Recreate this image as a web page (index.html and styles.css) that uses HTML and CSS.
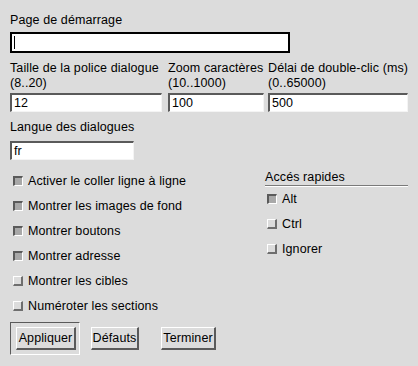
FILE: index.html
```html
<!DOCTYPE html>
<html lang="fr">
<head>
    <meta charset="UTF-8">
    <title>Préférences</title>
    <link rel="stylesheet" href="styles.css">
</head>
<body>

<div class="prefs">
    <div class="field start-field">
        <div class="label">Page de démarrage</div>
        <div class="entry focused start-entry"><span class="caret"></span></div>
    </div>

    <div class="numbers">
        <div class="col col-size">
            <div class="label">Taille de la police dialogue<br>(8..20)</div>
            <div class="entry">12</div>
        </div>
        <div class="col col-zoom">
            <div class="label">Zoom caractères<br>(10..1000)</div>
            <div class="entry">100</div>
        </div>
        <div class="col col-delay">
            <div class="label">Délai de double-clic (ms)<br>(0..65000)</div>
            <div class="entry">500</div>
        </div>
    </div>

    <div class="field lang-field">
        <div class="label">Langue des dialogues</div>
        <div class="entry lang-entry">fr</div>
    </div>

    <div class="options">
        <div class="checks">
            <div class="check"><span class="box on"></span>Activer le coller ligne à ligne</div>
            <div class="check"><span class="box on"></span>Montrer les images de fond</div>
            <div class="check"><span class="box on"></span>Montrer boutons</div>
            <div class="check"><span class="box on"></span>Montrer adresse</div>
            <div class="check"><span class="box"></span>Montrer les cibles</div>
            <div class="check"><span class="box"></span>Numéroter les sections</div>
        </div>
        <div class="quick">
            <div class="quick-title">Accés rapides</div>
            <div class="check"><span class="box on"></span>Alt</div>
            <div class="check"><span class="box"></span>Ctrl</div>
            <div class="check"><span class="box"></span>Ignorer</div>
        </div>
    </div>

    <div class="buttons">
        <div class="default-ring"><button class="btn btn-apply">Appliquer</button></div>
        <button class="btn btn-defaults">Défauts</button>
        <button class="btn btn-quit">Terminer</button>
    </div>
</div>

</body>
</html>
```

FILE: styles.css
```css
body {
    margin: 0;
    background-color: #dcdcdc;
    font-family: "Liberation Sans", Arial, sans-serif;
    font-size: 12.5px;
    letter-spacing: 0.1px;
    color: #000;
}
.prefs {
    width: 418px;
    height: 366px;
    padding: 13px 10px 0 10px;
    box-sizing: border-box;
}
.label {
    line-height: 15px;
    white-space: nowrap;
}
.entry {
    height: 19px;
    box-sizing: border-box;
    background: white;
    border-top: 2px solid #5a5a5a;
    border-left: 2px solid #5a5a5a;
    border-bottom: 1px solid #f4f4f4;
    border-right: 1px solid #f4f4f4;
    padding-left: 2px;
    line-height: 16px;
}
.entry.focused {
    border: 2px solid #000;
}
.start-field .label {
    margin-bottom: 4px;
}
.start-entry {
    width: 280px;
    height: 21px;
    position: relative;
}
.caret {
    position: absolute;
    left: 2px;
    top: 2px;
    width: 1px;
    height: 13px;
    background: #000;
}
.numbers {
    display: flex;
    margin-top: 8px;
}
.numbers .label {
    margin-bottom: 2px;
}
.col-size {
    width: 152px;
    margin-right: 6px;
}
.col-zoom {
    width: 96px;
    margin-right: 4px;
}
.col-delay {
    width: 140px;
}
.lang-field {
    margin-top: 8px;
}
.lang-field .label {
    margin-bottom: 6px;
}
.lang-entry {
    width: 124px;
}
.options {
    display: flex;
    margin-top: 8px;
}
.checks {
    width: 255px;
}
.check {
    display: flex;
    align-items: center;
    height: 25px;
    white-space: nowrap;
}
.checks .check {
    padding-left: 3px;
}
.box {
    width: 10px;
    height: 10px;
    box-sizing: border-box;
    margin-right: 5px;
    background: #dcdcdc;
    border-top: 1px solid #fff;
    border-left: 1px solid #fff;
    border-bottom: 2px solid #6e6e6e;
    border-right: 2px solid #6e6e6e;
}
.box.on {
    background: #a8a8a8;
    border-top: 2px solid #5a5a5a;
    border-left: 2px solid #5a5a5a;
    border-bottom: 1px solid #fff;
    border-right: 1px solid #fff;
}
.quick {
    width: 143px;
}
.quick-title {
    line-height: 14px;
    padding-bottom: 1px;
    border-bottom: 1px solid #7a7a7a;
    box-shadow: 0 1px 0 #fff;
    margin-top: 2px;
}
.quick .check {
    padding-left: 2px;
}
.buttons {
    display: flex;
    align-items: center;
    margin-top: 4px;
}
.default-ring {
    padding: 4px 3px 4px 5px;
    border-top: 1px solid #5a5a5a;
    border-left: 1px solid #5a5a5a;
    border-bottom: 1px solid #fff;
    border-right: 1px solid #fff;
    margin-right: 11px;
}
.btn {
    font-family: "Liberation Sans", Arial, sans-serif;
    font-size: 12.5px;
    letter-spacing: 0.1px;
    color: #000;
    background: #dcdcdc;
    height: 23px;
    padding: 0;
    text-align: center;
    border-top: 1px solid #fff;
    border-left: 1px solid #fff;
    border-bottom: 2px solid #5a5a5a;
    border-right: 2px solid #5a5a5a;
}
.btn-apply {
    width: 60px;
}
.btn-defaults {
    width: 48px;
    margin-right: 22px;
}
.btn-quit {
    width: 55px;
}
```
